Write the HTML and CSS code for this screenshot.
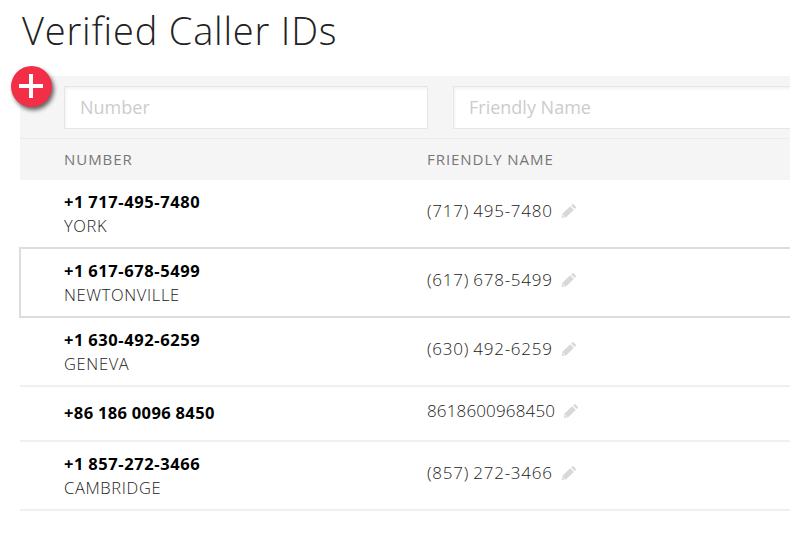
FILE: index.html
```html
<!DOCTYPE html>
<html lang="en">
<head>
<meta charset="utf-8">
<title>Verified Caller IDs</title>
<link rel="stylesheet" href="styles.css">
</head>
<body>
<svg width="0" height="0" class="defs">
  <symbol id="pencil" viewBox="0 0 16 16">
    <path d="M1.6 10.4 9.2 3.2l3.6 3.8L5.2 14.2 .8 14.9zM10.1 2.4l1-1q.8-.8 1.6 0l2 2.1q.8.8 0 1.6l-1 1z"/>
    <path class="tip" d="M2.3 12l1.5 1.5-.8.3-1-1z"/>
  </symbol>
</svg>
<main class="page">
  <h1 class="title">Verified Caller IDs</h1>
  <section class="table">
    <button class="add" aria-label="Add"><svg viewBox="0 0 24 24"><path d="M12 0v24M0 12h24"/></svg></button>
    <div class="filters">
      <input class="filter" placeholder="Number">
      <input class="filter" placeholder="Friendly Name">
    </div>
    <div class="cols head"><span>NUMBER</span><span>FRIENDLY NAME</span></div>
    <div class="cols row">
      <div><div class="number">+1 717-495-7480</div><div class="city">YORK</div></div>
      <div class="name"><span>(717) 495-7480</span><svg class="edit"><use href="#pencil"/></svg></div>
    </div>
    <div class="cols row active">
      <div><div class="number">+1 617-678-5499</div><div class="city">NEWTONVILLE</div></div>
      <div class="name"><span>(617) 678-5499</span><svg class="edit"><use href="#pencil"/></svg></div>
    </div>
    <div class="cols row">
      <div><div class="number">+1 630-492-6259</div><div class="city">GENEVA</div></div>
      <div class="name"><span>(630) 492-6259</span><svg class="edit"><use href="#pencil"/></svg></div>
    </div>
    <div class="cols row short">
      <div><div class="number intl">+86 186 0096 8450</div></div>
      <div class="name plain"><span>8618600968450</span><svg class="edit"><use href="#pencil"/></svg></div>
    </div>
    <div class="cols row">
      <div><div class="number">+1 857-272-3466</div><div class="city">CAMBRIDGE</div></div>
      <div class="name"><span>(857) 272-3466</span><svg class="edit"><use href="#pencil"/></svg></div>
    </div>
  </section>
</main>
</body>
</html>
```
FILE: styles.css
```css
* { box-sizing: border-box; }
body { margin: 0; background: #fff; font-family: "Open Sans", "Noto Sans", sans-serif; color: #222; overflow: hidden; }
.defs { position: absolute; }
.page { padding-left: 20px; }
.title { margin: 0; height: 76px; padding-left: 2px; font-size: 38px; font-weight: 300; line-height: 60px; letter-spacing: .8px; white-space: nowrap; }
.table { position: relative; }
.add { position: absolute; left: -9px; top: -10px; width: 41px; height: 41px; padding: 0 1px 1px 0; border: 0; border-radius: 50%; background: #f22f46; box-shadow: 2px 3px 4px rgba(0,0,0,.6); display: grid; place-items: center; }
.add svg { width: 24px; height: 24px; fill: none; stroke: #fff; stroke-width: 4; }
.filters { height: 63px; padding: 10px 0 0 44px; display: flex; gap: 25px; background: #f5f5f5; border-bottom: 1px solid #ebebeb; }
.filter { flex: none; width: 364px; height: 43px; padding: 0 15px 2px; border: 1px solid #e6e6e6; border-radius: 0; background: #fff; box-shadow: inset 1px 2px 3px rgba(0,0,0,.05); font: 18px "Open Sans", sans-serif; }
.filter::placeholder { color: #ccc; opacity: 1; }
.cols { display: grid; grid-template-columns: 363px 1fr; padding-left: 44px; align-items: center; }
.head { height: 41px; padding-bottom: 2px; background: #f5f5f5; color: #777; font-size: 15px; letter-spacing: .95px; }
.row { height: 69px; border-bottom: 2px solid #f0f0f0; padding-top: 1px; }
.row.active { position: relative; height: 71px; margin: -2px 0 0 -1px; border: 2px solid #ddd; border-right: 0; padding-left: 43px; }
.row.short { height: 55px; padding: 0 0 1px 44px; }
.number { font-size: 16.5px; font-weight: 700; letter-spacing: .6px; word-spacing: -.8px; color: #000; line-height: 24px; white-space: nowrap; }
.intl { letter-spacing: .4px; word-spacing: -.3px; }
.city { font-size: 16.5px; font-weight: 300; letter-spacing: .65px; line-height: 24px; }
.name { display: flex; align-items: center; gap: 8px; margin-bottom: 6px; font-size: 17px; font-weight: 300; letter-spacing: .75px; word-spacing: -1px; line-height: 24px; }
.plain { margin-bottom: 5px; letter-spacing: .15px; }
.edit { width: 16px; height: 16px; fill: #d8d8d8; }
.tip { fill: #fff; }
```
